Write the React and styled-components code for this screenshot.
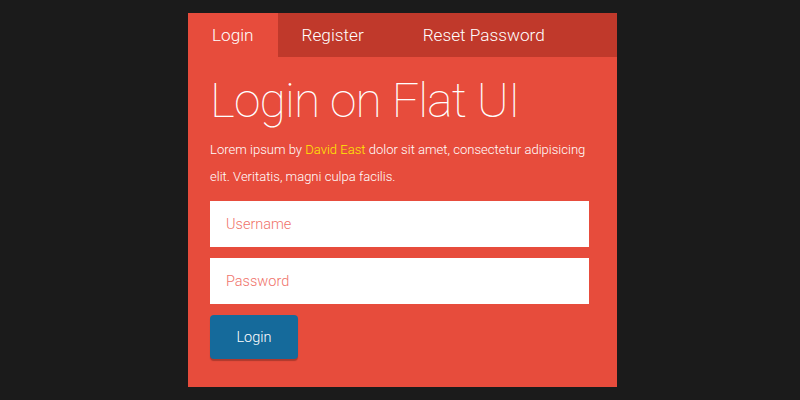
import React from "react";
import styled, { createGlobalStyle } from "styled-components";

const Global = createGlobalStyle`
  html, body { margin: 0; padding: 0; background: #1b1b1b; }
  body { font-family: Roboto, "Liberation Sans", sans-serif; }
  * { box-sizing: border-box; }
`;

const Page = styled.div`
  display: flex;
  justify-content: center;
  padding: 13px 0 0 5px;
  height: 400px;
`;

const Card = styled.div`
  width: 429px;
  height: 374px;
  background: #e74c3c;
  display: flex;
  flex-direction: column;
`;

const Tabs = styled.nav`
  display: flex;
  height: 44px;
  background: #c0392b;
`;

const Tab = styled.div`
  display: flex;
  align-items: center;
  height: 100%;
  padding: 0 ${(p) => p.$pr}px 0 ${(p) => p.$pl}px;
  font-size: 17.2px;
  font-weight: 300;
  color: #fff;
  background: ${(p) => (p.$active ? "#e74c3c" : "transparent")};
`;

const Body = styled.div`
  padding: 16px 22px 0 22px;
  display: flex;
  flex-direction: column;
`;

const Title = styled.h1`
  margin: 0;
  font-size: 48px;
  line-height: 56px;
  font-weight: 100;
  letter-spacing: -0.85px;
  color: #fff;
`;

const Text = styled.p`
  margin: 7px 0 11px;
  font-size: 13.05px;
  line-height: 27px;
  font-weight: 300;
  color: #fff;
`;

const Link = styled.span`
  color: #ffea00;
`;

const Input = styled.input`
  width: 379px;
  height: 46px;
  border: none;
  outline: none;
  background: #fff;
  padding: 0 16px;
  font-family: Roboto, "Liberation Sans", sans-serif;
  font-size: 14.5px;
  font-weight: 300;
  margin-bottom: 11px;
  &::placeholder { color: #f0736a; opacity: 1; }
`;

const Button = styled.button`
  width: 88px;
  height: 44px;
  border: none;
  border-radius: 4px;
  background: #156a9b;
  box-shadow: 0 2px 1px rgba(0, 0, 0, 0.25);
  color: #fff;
  font-family: Roboto, "Liberation Sans", sans-serif;
  font-size: 14.5px;
  font-weight: 300;
  padding: 0;
`;

export default function App() {
  return (
    <>
      <Global />
      <Page>
        <Card>
          <Tabs>
            <Tab $active $pl={24} $pr={24}>Login</Tab>
            <Tab $pl={24} $pr={35}>Register</Tab>
            <Tab $pl={24} $pr={24}>Reset Password</Tab>
          </Tabs>
          <Body>
            <Title>Login on Flat UI</Title>
            <Text>
              Lorem ipsum by <Link>David East</Link> dolor sit amet, consectetur adipisicing elit. Veritatis, magni culpa facilis.
            </Text>
            <Input placeholder="Username" />
            <Input placeholder="Password" />
            <Button>Login</Button>
          </Body>
        </Card>
      </Page>
    </>
  );
}
